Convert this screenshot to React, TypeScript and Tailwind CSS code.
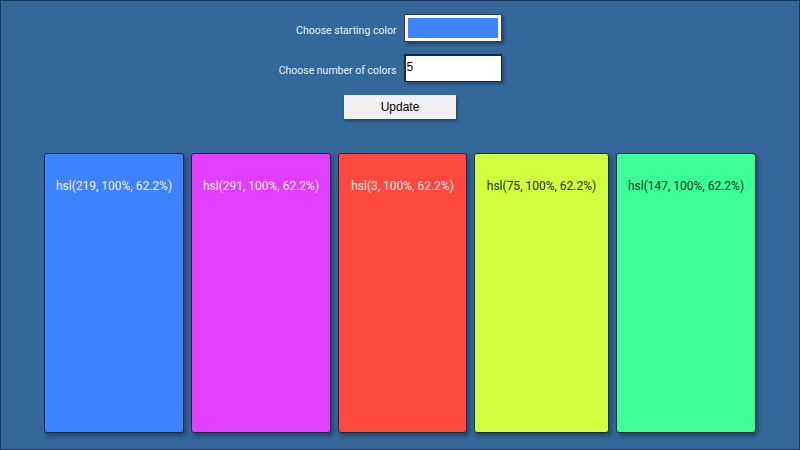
import { useState } from 'react';

type Swatch = { hue: number; width: string; text: string };

// widths follow each card's label length
const swatches: Swatch[] = [
  { hue: 219, width: 'w-[140px]', text: 'text-[#eef2ff]' },
  { hue: 291, width: 'w-[140px]', text: 'text-[#f6e6ff]' },
  { hue: 3, width: 'w-[129px]', text: 'text-[#ffe9e6]' },
  { hue: 75, width: 'w-[135px]', text: 'text-[#26300a]' },
  { hue: 147, width: 'w-[140px]', text: 'text-[#0d3a22]' },
];

export default function App() {
  const [start, setStart] = useState('#4083ff');
  const [count, setCount] = useState('5');

  return (
    <div
      className="w-[800px] h-[450px] bg-[#34679a] border border-[#1e3a5c] overflow-hidden"
      style={{ fontFamily: 'Roboto, "Noto Sans", sans-serif' }}
    >
      {/* controls */}
      <div className="grid grid-cols-2 gap-x-[7px] gap-y-[12px] pt-[13px] items-center">
        <label className="text-right text-[10.5px] pt-[5px] text-[#e9f0f8]">Choose starting color</label>
        <div>
          <div className="w-[98px] h-[28px] bg-white border border-[#2a3f5a] p-[3px] shadow-[2px_2px_3px_rgba(0,0,0,0.35)]">
            <input
              type="color"
              value={start}
              onChange={(e) => setStart(e.target.value)}
              className="hidden"
            />
            <div className="w-full h-full bg-[#4083ff]" />
          </div>
        </div>
        <label className="text-right text-[10.5px] pt-[5px] text-[#e9f0f8]">Choose number of colors</label>
        <div className="h-[28px]">
          <input
            value={count}
            onChange={(e) => setCount(e.target.value)}
            className="block w-[98px] h-[28px] bg-white border-t-2 border-l-2 border-b border-r border-[#1b2a3c] px-[1px] pb-[3px] text-[12px] text-black outline-none shadow-[2px_2px_3px_rgba(0,0,0,0.3)]"
            style={{ fontFamily: '"Liberation Sans", Arial, sans-serif' }}
          />
        </div>
      </div>

      <div className="flex justify-center pt-[13px]">
        <button
          className="w-[112px] h-[24px] bg-[#f0f0f0] text-[12px] text-black shadow-[1px_2px_3px_rgba(0,0,0,0.35)]"
          style={{ fontFamily: '"Liberation Sans", Arial, sans-serif' }}
        >
          Update
        </button>
      </div>

      {/* generated palette */}
      <div className="flex gap-[7px] px-[43px] pt-[34px]">
        {swatches.map((s) => (
          <div
            key={s.hue}
            className={`${s.width} h-[280px] shrink-0 rounded-[3px] border border-[#1c2b45] shadow-[2px_3px_4px_rgba(0,0,0,0.35)] pt-[23px] text-center text-[12px] ${s.text}`}
            style={{ backgroundColor: `hsl(${s.hue}, 100%, 62.2%)` }}
          >
            hsl({s.hue}, 100%, 62.2%)
          </div>
        ))}
      </div>
    </div>
  );
}
